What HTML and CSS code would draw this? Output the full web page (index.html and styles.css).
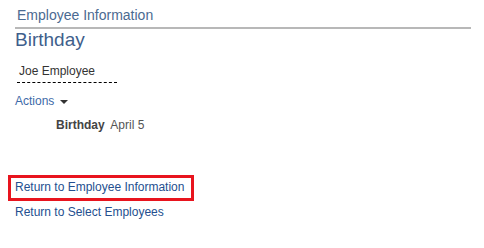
FILE: index.html
```html
<!DOCTYPE html>
<html>
<head>
    <meta charset="utf-8">
    <title>Birthday</title>
    <link rel="stylesheet" href="styles.css">
</head>
<body>
    <div class="page">
        <div class="page-title">Employee Information</div>
        <h1 class="page-heading">Birthday</h1>
        <div class="employee"><span class="employee-name">Joe Employee</span></div>
        <div class="actions">Actions <span class="caret"></span></div>
        <div class="detail">
            <span class="detail-label">Birthday</span>
            <span class="detail-value">April 5</span>
        </div>
        <div class="links">
            <a class="link link-focus" href="#">Return to Employee Information</a>
            <a class="link" href="#">Return to Select Employees</a>
        </div>
    </div>
</body>
</html>
```

FILE: styles.css
```css
body {
    font-family: Arial, "Liberation Sans", sans-serif;
    background-color: #fff;
    margin: 0;
    padding: 0;
    color: #333;
}

.page {
    padding: 7px 13px 0 15px;
}

.page-title {
    font-size: 14px;
    color: #4b6a91;
    padding: 0 0 3px 2px;
    border-bottom: 2px solid #b8b8b8;
    line-height: 17px;
}

.page-heading {
    font-size: 19px;
    font-weight: normal;
    color: #3f5f8c;
    margin: 0;
    line-height: 22px;
}

.employee {
    margin-top: 10px;
    padding-left: 2px;
}

.employee-name {
    display: inline-block;
    font-size: 12px;
    padding: 0 2px 3px 2px;
    border-bottom: 1px dashed #000;
    width: 96px;
    line-height: 15px;
}

.actions {
    margin-top: 11px;
    font-size: 12px;
    color: #3d6aa8;
    line-height: 15px;
}

.caret {
    display: inline-block;
    width: 0;
    height: 0;
    margin-left: 2px;
    vertical-align: middle;
    border-top: 4px solid #333;
    border-left: 4px solid transparent;
    border-right: 4px solid transparent;
}

.detail {
    margin: 9px 0 0 41px;
    font-size: 12px;
    line-height: 15px;
}

.detail-label {
    font-weight: bold;
    color: #444;
    margin-right: 3px;
}

.detail-value {
    color: #555;
}

.links {
    margin-top: 42px;
    display: flex;
    flex-direction: column;
    align-items: flex-start;
    gap: 4px;
}

.link {
    font-size: 12px;
    color: #244f8f;
    text-decoration: none;
    line-height: 15px;
}

.link-focus {
    margin-left: -7px;
    padding: 2px 7px 3px 4px;
    border: 3px solid #e8141e;
}
```
